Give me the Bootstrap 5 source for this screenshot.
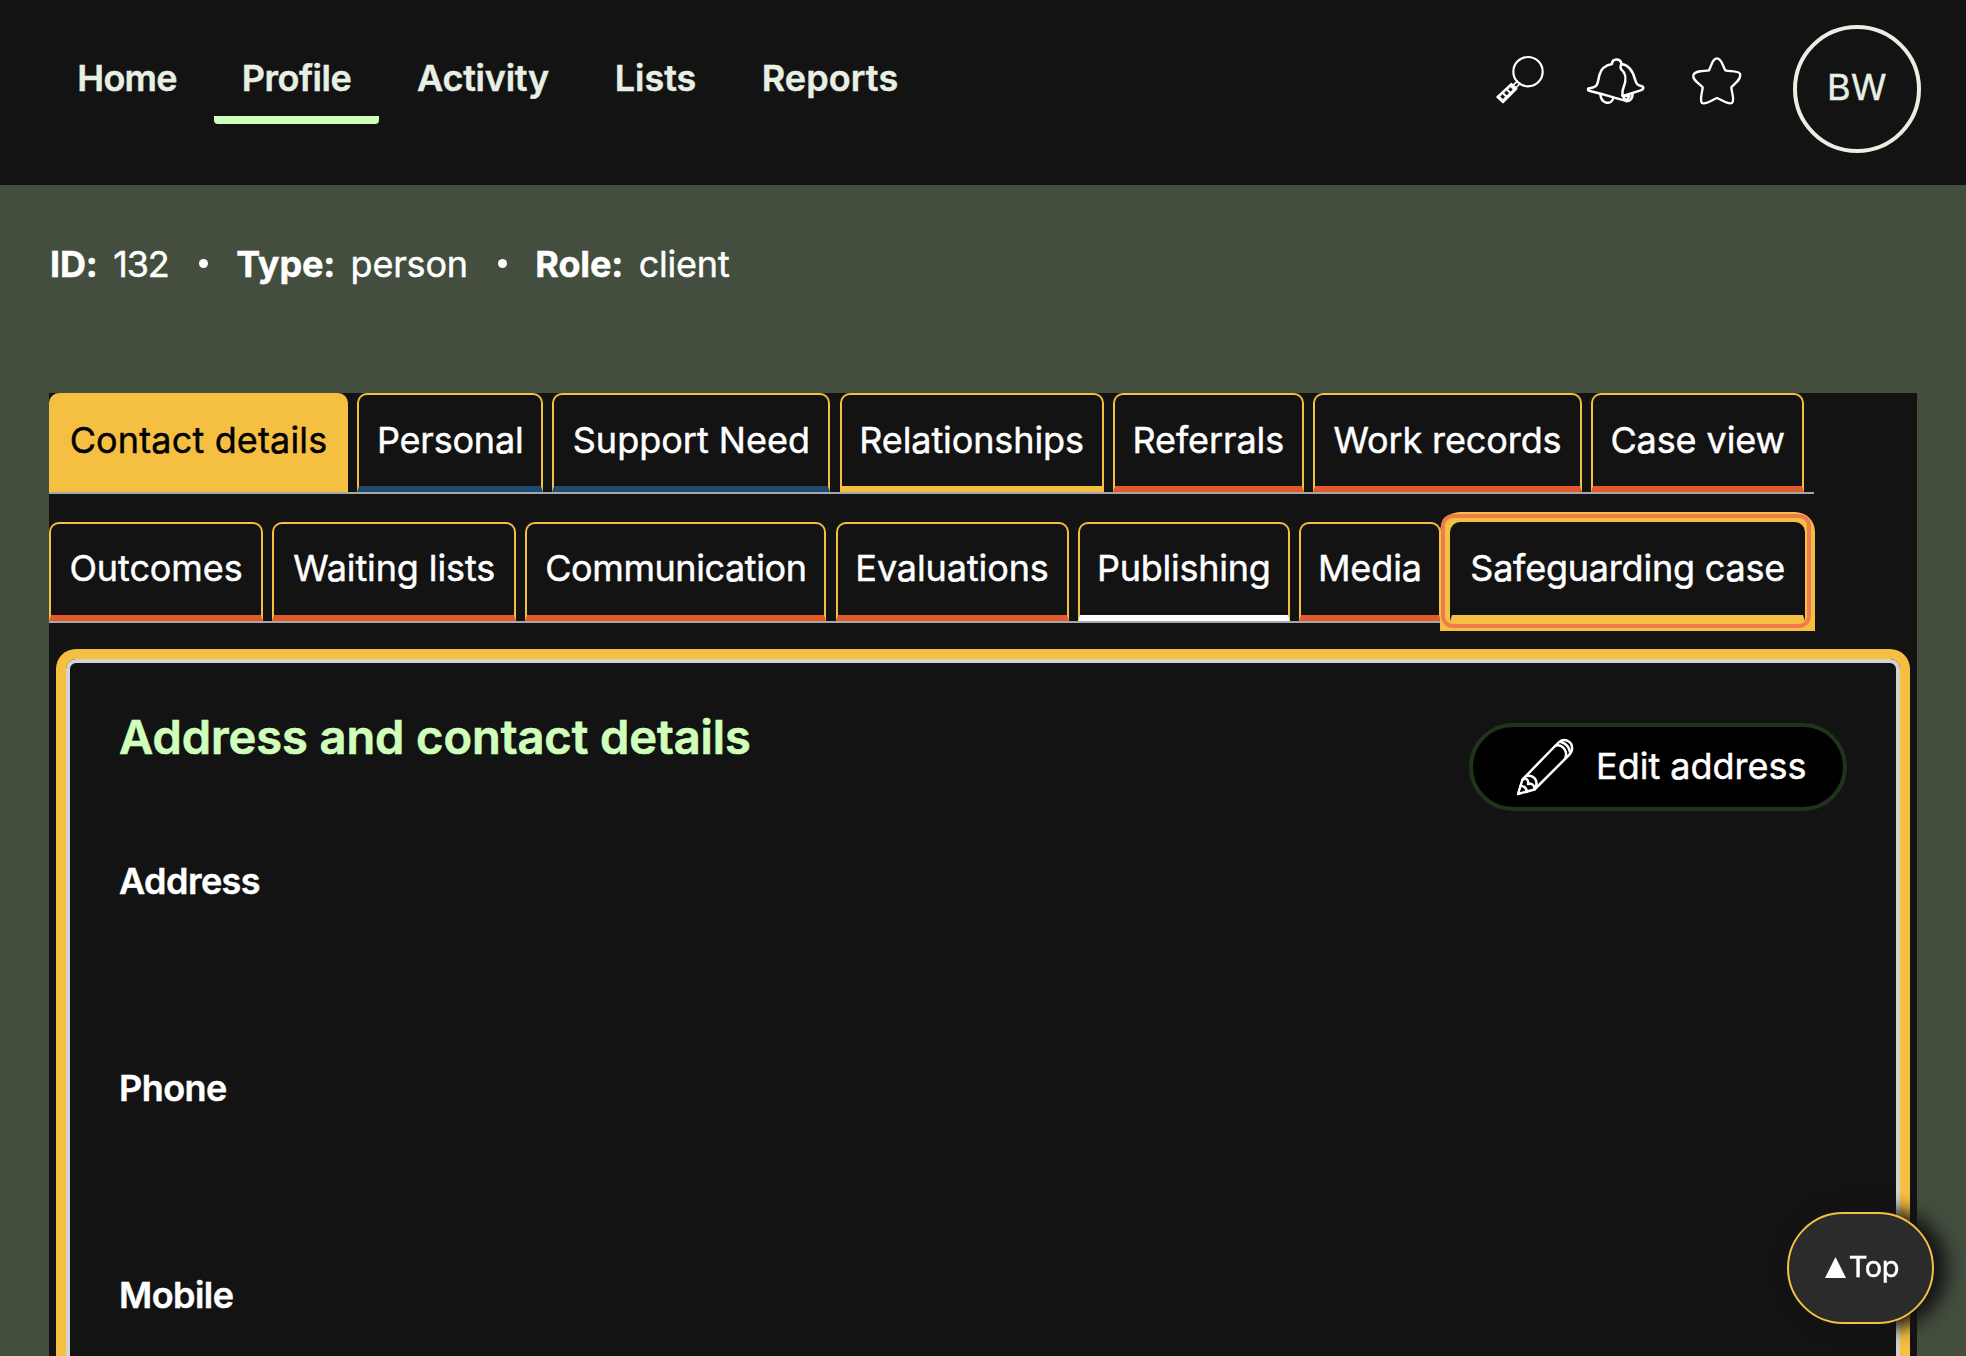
<!DOCTYPE html>
<html lang="en">
<head>
<meta charset="utf-8">
<meta name="viewport" content="width=device-width, initial-scale=1">
<title>Client profile</title>
<link href="https://cdn.jsdelivr.net/npm/bootstrap@5.3.0/dist/css/bootstrap.min.css" rel="stylesheet">
<style>
:root { --ink:#131313; --moss:#434e3e; --gold:#f5bf42; --rust:#e2592c; --navy:#1e4a70; --mint:#cfffbb; --pale:#e8efe3; }
body { background:var(--moss); color:#fff; font-family:Inter,"Open Sans",sans-serif; font-size:36px; line-height:54px; height:100vh; overflow:hidden; -webkit-text-stroke:.45px currentColor; }
.topbar { background:var(--ink); height:185px; padding:0 45px 0 48px; flex:none; }
.mainnav { gap:9px; padding-top:51px; }
.mainnav .nav-link { color:var(--pale); font-weight:600; padding:0 0 11px; border-bottom:8px solid transparent; border-radius:0 0 4px 4px; text-align:center; letter-spacing:-.5px; white-space:nowrap; }
.mainnav .nav-link.active { border-bottom-color:var(--mint); }
.mainnav .n-home { width:157px; letter-spacing:-.8px; padding-left:1px; }
.mainnav .n-profile { width:165px; }
.mainnav .n-activity { width:190px; letter-spacing:-.25px; }
.mainnav .n-lists { width:137px; letter-spacing:0; }
.mainnav .n-reports { width:194px; letter-spacing:.1px; }
.tools svg { display:block; fill:none; stroke:#fff; stroke-linejoin:round; stroke-linecap:round; }
.tool-search { margin:52px 38px 0 0; }
.tool-bell { margin:54px 44px 0 0; }
.tool-star { margin:54px 49px 0 0; }
.avatar { width:128px; height:128px; margin-top:24.5px; border:4px solid var(--pale); color:var(--pale); letter-spacing:.4px; padding-bottom:4px; }
.facts { padding:52px 0 0 50px; height:208px; flex:none; }
.facts b { font-weight:700; margin-right:15.5px; letter-spacing:-.15px; }
.facts .v { letter-spacing:-.2px; }
.facts .v-id { letter-spacing:-1.1px; }
.pip { width:9px; height:9px; border-radius:50%; background:#fff; margin:22px 28.500px 0 30px; }
.profile { background:var(--ink); margin:0 49px; min-height:0; }
.tabline { width:1765px; border-bottom:2px solid #a5a7a8; gap:9.2px; flex:none; }
.tabline + .tabline { margin-top:28px; }
.tabline .nav-link { color:#fff; background:var(--ink); height:99px; padding:18px 0 0; border:2px solid var(--gold); border-bottom:6px solid var(--rust); border-radius:10px 10px 0 0; text-align:center; white-space:nowrap; flex:none; letter-spacing:-.1px; }
.tabline + .tabline .nav-link { padding-top:17px; }
.tabline .nav-link.active { background:var(--gold); border-color:var(--gold); color:#000; }
.tabline .t-navy { border-bottom-color:var(--navy); }
.tabline .t-gold { border-bottom-color:var(--gold); }
.tabline .t-white { border-bottom-color:#fff; }
.tabline .t-focus { position:relative; border-color:transparent; border-bottom-color:var(--gold); box-shadow:0 0 0 10px var(--gold); }
.t-focus::after { content:""; position:absolute; inset:-10px -8px -13px -11px; border:4px solid #f07b50; border-radius:12px; }
.tabline .w-contact { width:299px; letter-spacing:.15px; } .tabline .w-personal { width:186px; letter-spacing:-.2px; } .tabline .w-support { width:278px; letter-spacing:0; }
.tabline .w-relation { width:264px; } .w-referrals { width:191px; } .tabline .w-work { width:269px; letter-spacing:-.1px; } .w-case { width:213px; }
.w-outcomes { width:214px; } .w-waiting { width:244px; } .tabline .w-comm { width:301px; letter-spacing:-.42px; } .w-eval { width:233px; }
.tabline .w-publish { width:212px; letter-spacing:-.25px; } .w-media { width:142px; } .tabline .w-safe { width:355px; letter-spacing:-.22px; }
.panel { margin:36px 17px 0; border:4px solid #d3d3d3; border-bottom:0; border-radius:10px 10px 0 0; box-shadow:0 0 0 10px var(--gold); padding:46px 49px 0; min-height:0; overflow:hidden; }
.panel h1 { color:var(--mint); font-size:47px; line-height:56px; font-weight:600; margin:0; letter-spacing:-.07px; -webkit-text-stroke-width:.7px; }
.edit { width:378px; height:88px; margin-top:14px; background:#000; border:4px solid #1f3519; border-radius:44px; color:#fff; font-size:36px; line-height:54px; padding:0 0 3px 41px; }
.edit:hover { background:#000; color:#fff; }
.edit svg { fill:none; stroke:#fff; stroke-width:2.5; stroke-linejoin:round; stroke-linecap:round; margin-right:20px; }
.fields { margin-top:43px; }
.fields dt { font-weight:600; height:207px; letter-spacing:-.55px; }
.fields dt:last-child { height:54px; }
.totop { position:fixed; right:32px; bottom:32px; width:147px; height:112px; background:#2b2b2b; border:2px solid var(--gold); border-radius:56px; box-shadow:9px 1px 18px 4px #131313; color:#fff; font-size:29px; line-height:44px; letter-spacing:-.4px; text-decoration:none; padding:0 0 2px 3px; }
.totop svg { margin-right:3px; }
</style>
</head>
<body class="d-flex flex-column">
<header class="topbar d-flex justify-content-between align-items-start">
  <nav class="nav mainnav flex-nowrap">
    <a class="nav-link n-home" href="#">Home</a>
    <a class="nav-link n-profile active" href="#">Profile</a>
    <a class="nav-link n-activity" href="#">Activity</a>
    <a class="nav-link n-lists" href="#">Lists</a>
    <a class="nav-link n-reports" href="#">Reports</a>
  </nav>
  <div class="tools d-flex align-items-start">
    <svg class="tool-search" width="54" height="54" viewBox="100 156 162 162" stroke-width="6.5">
      <circle cx="202" cy="215" r="44"/>
      <path d="M170 244L157 256M178 251L165 264" stroke-width="5"/>
      <path d="M152 252L167 266L127 307L110 291Z" fill="#fff"/>
      <path d="M150 263l5 6-6 5-5-6zM138 273l6 7-6 5-6-6zM126 284l6 6-5 6-7-6z" fill="#131313" stroke="#131313" stroke-width="2"/>
    </svg>
    <svg class="tool-bell" width="60" height="52" viewBox="378 162 180 156" stroke-width="7.5">
      <path d="M456 192C456 174 481 174 484 190C483 198 479 202 483 207C502 224 498 243 491 261C483 281 487 289 499 303C463 293 428 282 390 273C381 271 382 264 392 264C414 262 413 249 418 226C423 207 437 195 456 192Z"/>
      <path d="M484 192C509 195 519 215 525 238C529 255 536 256 547 259C553 263 550 269 542 271L489 288"/>
      <path d="M421 283C424 313 454 316 460 294M518 280C517 300 507 304 499 303M487 287L508 288L499 303"/>
    </svg>
    <svg class="tool-star" width="54" height="54" viewBox="690 162 162 162" stroke-width="7">
      <path d="M747 211C754 198 757 175 771 175C785 175 788 198 796 211C811 215 833 211 840 221C846 236 826 249 814 262C815 278 825 301 816 309C805 315 787 300 771 294C755 300 738 315 726 309C718 300 727 278 728 262C717 249 697 241 700 225C706 210 733 214 747 211Z"/>
    </svg>
    <div class="avatar rounded-circle d-flex align-items-center justify-content-center">BW</div>
  </div>
</header>

<div class="facts d-flex align-items-start">
  <b>ID:</b><span class="v v-id">132</span><i class="pip"></i>
  <b>Type:</b><span class="v">person</span><i class="pip"></i>
  <b>Role:</b><span class="v">client</span>
</div>

<main class="profile d-flex flex-column flex-grow-1">
  <nav class="nav tabline flex-nowrap">
    <a class="nav-link active w-contact" href="#">Contact details</a>
    <a class="nav-link t-navy w-personal" href="#">Personal</a>
    <a class="nav-link t-navy w-support" href="#">Support Need</a>
    <a class="nav-link t-gold w-relation" href="#">Relationships</a>
    <a class="nav-link w-referrals" href="#">Referrals</a>
    <a class="nav-link w-work" href="#">Work records</a>
    <a class="nav-link w-case" href="#">Case view</a>
  </nav>
  <nav class="nav tabline flex-nowrap">
    <a class="nav-link w-outcomes" href="#">Outcomes</a>
    <a class="nav-link w-waiting" href="#">Waiting lists</a>
    <a class="nav-link w-comm" href="#">Communication</a>
    <a class="nav-link w-eval" href="#">Evaluations</a>
    <a class="nav-link t-white w-publish" href="#">Publishing</a>
    <a class="nav-link w-media" href="#">Media</a>
    <a class="nav-link t-focus w-safe" href="#">Safeguarding case</a>
  </nav>

  <section class="panel flex-grow-1">
    <div class="d-flex justify-content-between align-items-start">
      <h1>Address and contact details</h1>
      <button type="button" class="btn edit d-flex align-items-center">
        <svg width="62" height="62" viewBox="1514 735 62 62">
          <path d="M1518 794L1522.500 779.500L1558 743C1564 737 1573 741 1572 749.500C1572 751.500 1571 753 1569.500 754.500L1534.500 789.500Z"/>
          <path d="M1555 746C1561 743 1568 750 1565.500 757.500M1561 742C1566 743.500 1569 747 1570 752"/>
          <path d="M1522.500 779.500C1526 777.500 1529 780 1528 784C1532 783 1535 785.500 1534.500 789.500M1527 776C1533 774.500 1538 780 1536 786M1520.500 786C1524 785.500 1527 788.500 1526.500 792"/>
        </svg>
        <span>Edit address</span>
      </button>
    </div>
    <dl class="fields mb-0">
      <dt>Address</dt>
      <dt>Phone</dt>
      <dt>Mobile</dt>
    </dl>
  </section>
</main>

<a class="totop d-flex align-items-center justify-content-center" href="#"><svg width="21" height="21" viewBox="0 0 21 21" fill="#fff"><path d="M10.500 0L21 21H0Z"/></svg><span>Top</span></a>
<script src="https://cdn.jsdelivr.net/npm/bootstrap@5.3.0/dist/js/bootstrap.bundle.min.js"></script>
</body>
</html>
